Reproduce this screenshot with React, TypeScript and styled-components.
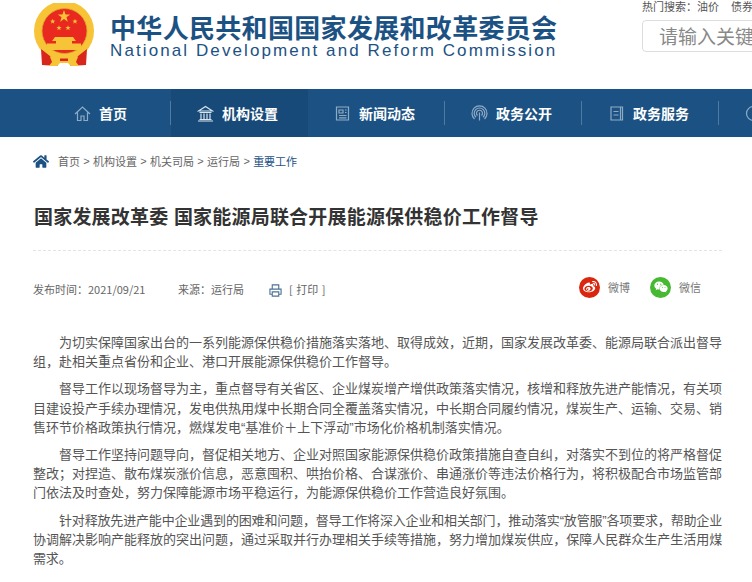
import React from 'react';
import styled, { createGlobalStyle } from 'styled-components';
import { FaHome, FaWeibo, FaWeixin } from 'react-icons/fa';

const CJK = '"Noto Sans CJK SC", "Liberation Sans", sans-serif';

const GlobalStyle = createGlobalStyle`
  html, body {
    margin: 0;
    padding: 0;
    background: #fff;
    overflow: hidden;
  }
  body {
    font-family: ${CJK};
  }
`;

const Page = styled.div`
  width: 752px;
  height: 582px;
  overflow: hidden;
`;

const Header = styled.header`
  display: flex;
  height: 89px;
  padding-left: 34px;
`;

const Emblem = styled.svg`
  width: 60px;
  height: 65px;
  margin-top: 3px;
  flex-shrink: 0;
`;

const TitleBlock = styled.div`
  margin-left: 16px;
  padding-top: 12px;
  width: 448px;
  flex-shrink: 0;
  color: #1c5283;
`;

const SiteName = styled.div`
  font-size: 26px;
  line-height: 30px;
  font-weight: 700;
  letter-spacing: 0.32px;
  white-space: nowrap;
`;

const SiteNameEn = styled.div`
  font-family: "Liberation Sans", sans-serif;
  font-size: 17px;
  line-height: 18px;
  letter-spacing: 2.1px;
  white-space: nowrap;
`;

const SearchBlock = styled.div`
  margin-left: 84px;
  width: 240px;
  flex-shrink: 0;
`;

const HotWords = styled.div`
  display: flex;
  gap: 12px;
  font-size: 11px;
  line-height: 12px;
  color: #555;
  white-space: nowrap;
`;

const SearchBox = styled.div`
  margin-top: 8px;
  height: 30px;
  border: 1px solid #ddd;
  border-radius: 4px;
  padding-left: 16px;
  font-size: 19px;
  line-height: 30px;
  color: #888;
  white-space: nowrap;
`;

const NavBar = styled.nav`
  display: flex;
  height: 48px;
  padding-left: 34px;
  background: #1c5283;
`;

const NavItem = styled.div<{ $active?: boolean }>`
  position: relative;
  box-sizing: border-box;
  display: flex;
  align-items: center;
  justify-content: center;
  gap: 8px;
  width: 137px;
  padding-right: 4px;
  flex-shrink: 0;
  background: ${(p) => (p.$active ? '#174a78' : 'transparent')};
  color: #fff;
  font-size: 14px;
  font-weight: 700;
  &::after {
    content: '';
    display: ${(p) => (p.$active ? 'none' : 'block')};
    position: absolute;
    right: 0;
    top: 12px;
    bottom: 12px;
    width: 1px;
    background: #4f7aa1;
  }
`;

const NavIcon = styled.svg<{ $bright?: boolean }>`
  width: 17px;
  height: 17px;
  fill: none;
  stroke: ${(p) => (p.$bright ? '#d9e4ee' : '#8fabc4')};
  stroke-width: 1.2;
  flex-shrink: 0;
`;

const Main = styled.main`
  padding: 16px 30px 0 33px;
`;

const Crumbs = styled.div`
  display: flex;
  align-items: center;
  height: 16px;
  font-size: 11px;
  color: #666;
  white-space: nowrap;
`;

const CrumbHome = styled(FaHome)`
  width: 16px;
  height: 15px;
  margin-right: 9px;
  color: #1c5283;
`;

const CrumbArrow = styled.span`
  margin: 0 3.3px;
  font-family: "Liberation Sans", sans-serif;
`;

const CrumbCurrent = styled.span`
  color: #1c5283;
`;

const ArticleTitle = styled.h1`
  margin: 0;
  padding: 33px 0 21px 1px;
  font-size: 19px;
  line-height: 27px;
  font-weight: 700;
  letter-spacing: 0.2px;
  word-spacing: 1px;
  color: #333;
  white-space: nowrap;
  border-bottom: 1px dashed #e3e3e3;
`;

const MetaRow = styled.div`
  display: flex;
  align-items: center;
  height: 22px;
  margin-top: 25px;
  font-size: 11px;
  color: #666;
  white-space: nowrap;
`;

const MetaInfo = styled.div`
  display: flex;
  align-items: center;
  padding-top: 4px;
`;

const MetaDate = styled.span`
  width: 145px;
`;

const MetaSource = styled.span`
  width: 91px;
`;

const PrintIcon = styled.svg`
  width: 13px;
  height: 13px;
  margin: 3px 7px 0 0;
  fill: none;
  stroke: #4b7296;
  stroke-width: 1.2;
`;

const PrintLabel = styled.span`
  word-spacing: 1px;
`;

const ShareGroup = styled.div`
  display: flex;
  align-items: center;
  margin-left: auto;
  margin-right: 1px;
`;

const ShareBadge = styled.span<{ $color: string }>`
  display: flex;
  align-items: center;
  justify-content: center;
  width: 21px;
  height: 21px;
  border-radius: 50%;
  background: ${(p) => p.$color};
  color: #fff;
  font-size: 14px;
`;

const ShareText = styled.span`
  margin-left: 8px;
  width: 42px;
  color: #777;
`;

const Body = styled.div`
  margin-top: 35px;
`;

const Para = styled.p<{ $tight?: boolean }>`
  margin: 0 0 8px;
  font-family: "Liberation Sans", ${CJK};
  font-size: 13px;
  line-height: 19.2px;
  letter-spacing: ${(p) => (p.$tight ? '-0.18px' : 'normal')};
  color: #555;
  text-indent: 2em;
  text-align: justify;
`;

const NoBreak = styled.span`
  white-space: nowrap;
`;

const navItems = ['首页', '机构设置', '新闻动态', '政务公开', '政务服务', '互动交流'];

const navIcons = [
  <path key="home" d="M1 9 8.500 2 16 9M3.500 7.500V15.500H7V11H10V15.500H13.500V7.500" />,
  <path key="org" d="M1.500 6 8.500 1.500 15.500 6ZM2.500 7.500H14.500M4 8.500V14M7 8.500V14M10 8.500V14M13 8.500V14M2.500 14.500H14.500M1 16H16" />,
  <path key="news" d="M2.500 2H14.500V15H2.500ZM5 5H9V8H5ZM11 5H12.500M11 7.500H12.500M5 10.500H12.500M5 12.800H12.500" />,
  <path key="open" d="M8.500 7.500V15.500M6.500 10.500A3 3 0 1 1 10.500 10.500M5 12.300A5.300 5.300 0 1 1 12 12.300M3.500 14A7.500 7.500 0 1 1 13.500 14" />,
  <path key="service" d="M3 2H14.500V15H3ZM12.500 2V15M5.500 6.500H10.500M5.500 10H10.500" />,
  <circle key="talk" cx="8.500" cy="8.500" r="7" />,
];

const paragraphs = [
  '为切实保障国家出台的一系列能源保供稳价措施落实落地、取得成效，近期，国家发展改革委、能源局联合派出督导组，赴相关重点省份和企业、港口开展能源保供稳价工作督导。',
  '督导工作以现场督导为主，重点督导有关省区、企业煤炭增产增供政策落实情况，核增和释放先进产能情况，有关项目建设投产手续办理情况，发电供热用煤中长期合同全覆盖落实情况，中长期合同履约情况，煤炭生产、运输、交易、销售环节价格政策执行情况，燃煤发电“基准价＋上下浮动”市场化价格机制落实情况。',
  '督导工作坚持问题导向，督促相关地方、企业对照国家能源保供稳价政策措施自查自纠，对落实不到位的将严格督促整改；对捏造、散布煤炭涨价信息，恶意囤积、哄抬价格、合谋涨价、串通涨价等违法价格行为，将积极配合市场监管部门依法及时查处，努力保障能源市场平稳运行，为能源保供稳价工作营造良好氛围。',
];

const lastParagraph = '针对释放先进产能中企业遇到的困难和问题，督导工作将深入企业和相关部门，推动落实“放管服”各项要求，帮助企业协调解决影响产能释放的突出问题，通过采取并行办理相关手续等措施，努力增加煤炭供应，保障人民群众生产生活用煤';

const star = (cx: number, cy: number, r: number) => {
  const pts: string[] = [];
  for (let i = 0; i < 10; i++) {
    const rad = i % 2 === 0 ? r : r * 0.4;
    const a = (Math.PI / 5) * i - Math.PI / 2;
    pts.push(`${(cx + rad * Math.cos(a)).toFixed(2)},${(cy + rad * Math.sin(a)).toFixed(2)}`);
  }
  return pts.join(' ');
};

const NationalEmblem = () => (
  <Emblem viewBox="0 0 60 65">
    <circle cx="30" cy="28" r="30" fill="#f6c436" />
    <path d="M7 46 16 53 24 63 8 62ZM53 46 44 53 36 63 52 62Z" fill="#d9261c" />
    <circle cx="30.500" cy="28" r="22.500" fill="#e9291f" stroke="#d8a52c" strokeWidth="0.8" />
    <polygon points={star(30, 13.500, 6.500)} fill="#f6c436" />
    <polygon points={star(18.700, 18.500, 2.800)} fill="#f6c436" />
    <polygon points={star(41, 18.500, 2.800)} fill="#f6c436" />
    <polygon points={star(25, 25, 2.800)} fill="#f6c436" />
    <polygon points={star(34, 25, 2.800)} fill="#f6c436" />
    <path d="M21 34H39L42 38H38V40.500H47V47H13V40.500H22V38H18Z" fill="#f6c436" />
    <path d="M16 54C21 50 26 52 30 54 34 52 39 50 44 54L42 59 45 63H37L34 60H26L23 63H15L18 59Z" fill="#f6c436" />
    <path d="M26 55.500H34V58H26Z" fill="#d9261c" />
  </Emblem>
);

const App = () => (
  <Page>
    <GlobalStyle />
    <Header>
      <NationalEmblem />
      <TitleBlock>
        <SiteName>中华人民共和国国家发展和改革委员会</SiteName>
        <SiteNameEn>National Development and Reform Commission</SiteNameEn>
      </TitleBlock>
      <SearchBlock>
        <HotWords>
          <span>热门搜索：油价</span>
          <span>债券</span>
        </HotWords>
        <SearchBox>请输入关键词</SearchBox>
      </SearchBlock>
    </Header>
    <NavBar>
      {navItems.map((label, i) => (
        <NavItem key={label} $active={i === 1}>
          <NavIcon viewBox="0 0 17 17" $bright={i === 1}>
            {navIcons[i]}
          </NavIcon>
          {label}
        </NavItem>
      ))}
    </NavBar>
    <Main>
      <Crumbs>
        <CrumbHome />
        首页<CrumbArrow>&gt;</CrumbArrow>机构设置<CrumbArrow>&gt;</CrumbArrow>机关司局
        <CrumbArrow>&gt;</CrumbArrow>运行局<CrumbArrow>&gt;</CrumbArrow>
        <CrumbCurrent>重要工作</CrumbCurrent>
      </Crumbs>
      <ArticleTitle>国家发展改革委 国家能源局联合开展能源保供稳价工作督导</ArticleTitle>
      <MetaRow>
        <MetaInfo>
          <MetaDate>发布时间：2021/09/21</MetaDate>
          <MetaSource>来源：运行局</MetaSource>
          <PrintIcon viewBox="0 0 14 14">
            <path d="M3.500 5V1H10.500V5M3.500 11H1V5.500H13V11H10.500M3.500 8.500H10.500V13H3.500Z" />
          </PrintIcon>
          <PrintLabel>[ 打印 ]</PrintLabel>
        </MetaInfo>
        <ShareGroup>
          <ShareBadge $color="#d8260f">
            <FaWeibo />
          </ShareBadge>
          <ShareText>微博</ShareText>
          <ShareBadge $color="#47b832">
            <FaWeixin />
          </ShareBadge>
          <ShareText>微信</ShareText>
        </ShareGroup>
      </MetaRow>
      <Body>
        {paragraphs.map((text) => (
          <Para key={text.slice(0, 8)}>{text}</Para>
        ))}
        <Para $tight>
          {lastParagraph}
          <NoBreak>需求。</NoBreak>
        </Para>
      </Body>
    </Main>
  </Page>
);

export default App;
